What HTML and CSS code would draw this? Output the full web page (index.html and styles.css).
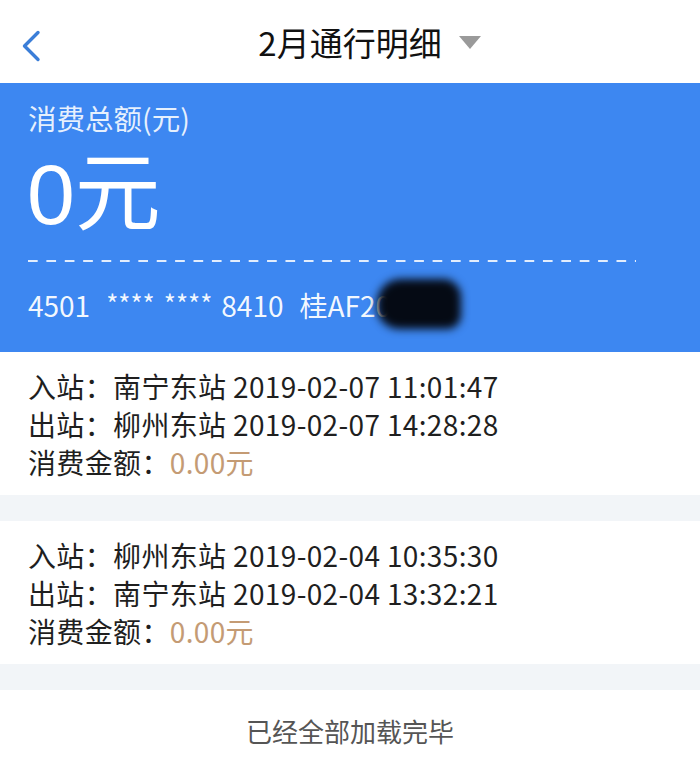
FILE: index.html
```html
<!DOCTYPE html>
<html lang="zh-CN">
<head>
<meta charset="utf-8">
<title>2月通行明细</title>
<link rel="stylesheet" href="styles.css">
</head>
<body>
<div class="page">
  <header class="topbar">
    <div class="back">
      <svg width="28" height="36" viewBox="0 0 28 36"><path d="M23 4.5 L9.5 18 L23 31.5" fill="none" stroke="#3b7ed8" stroke-width="3.4" stroke-linecap="round" stroke-linejoin="round"/></svg>
    </div>
    <div class="title">2月通行明细</div>
    <div class="caret-wrap"><span class="caret"></span></div>
  </header>

  <section class="summary">
    <div class="sum-label">消费总额(元)</div>
    <div class="sum-amount">0元</div>
    <div class="dashes"></div>
    <div class="card-no"><span class="seg">4501</span><span class="stars">****</span><span class="stars">****</span><span class="seg">8410</span><span class="plate">桂AF20</span><span class="blot"></span></div>
  </section>

  <div class="list">
    <div class="item">
      <div class="row">入站：南宁东站 2019-02-07 11:01:47</div>
      <div class="row">出站：柳州东站 2019-02-07 14:28:28</div>
      <div class="row">消费金额：<span class="money">0.00元</span></div>
    </div>
    <div class="item">
      <div class="row">入站：柳州东站 2019-02-04 10:35:30</div>
      <div class="row">出站：南宁东站 2019-02-04 13:32:21</div>
      <div class="row">消费金额：<span class="money">0.00元</span></div>
    </div>
  </div>

  <footer class="end">已经全部加载完毕</footer>
</div>
</body>
</html>
```

FILE: styles.css
```css
* { box-sizing: border-box; }
html, body { margin: 0; padding: 0; }
body {
  width: 700px;
  height: 775px;
  overflow: hidden;
  background: #f2f5f8;
  font-family: "Noto Sans CJK SC", "Noto Sans", sans-serif;
  color: #1c1c1c;
}
.page { display: flex; flex-direction: column; }

.topbar {
  height: 83px;
  background: #fff;
  display: grid;
  grid-template-columns: 1fr auto 1fr;
  align-items: center;
}
.back { padding-left: 15px; display: flex; align-items: center; padding-top: 8px; }
.title {
  font-size: 33px;
  line-height: 40px;
  color: #111;
}
.caret-wrap { display: flex; align-items: center; padding-left: 17px; padding-top: 1px; }
.caret {
  width: 0; height: 0;
  border-left: 11px solid transparent;
  border-right: 11px solid transparent;
  border-top: 13px solid #9a9a9a;
}

.summary {
  background: #3d87f1;
  color: #fff;
  padding: 17px 28px 29px;
  height: 269px;
}
.sum-label { font-size: 28.5px; line-height: 36px; color: rgba(255,255,255,0.88); }
.sum-amount {
  font-family: "Liberation Sans", "Noto Sans CJK SC", sans-serif;
  font-size: 86px;
  line-height: 80px;
  margin-top: 18px;
  margin-left: -1px;
}
.dashes {
  margin-top: 26px;
  height: 2px;
  width: 608px;
  background-image: linear-gradient(to right, rgba(255,255,255,0.85) 0 10px, transparent 10px);
  background-size: 18.4px 2px;
}
.card-no {
  position: relative;
  display: flex;
  align-items: center;
  margin-top: 25px;
  font-size: 28px;
  line-height: 36px;
  color: rgba(255,255,255,0.95);
}
.seg { margin-right: 16px; }
.stars { font-size: 26px; margin-right: 9px; position: relative; top: -2px; }
.blot {
  position: absolute;
  left: 349px;
  top: -8px;
  width: 84px;
  height: 50px;
  background: #050a14;
  border-radius: 24px 18px 14px 22px;
  filter: blur(4px);
}

.list { display: flex; flex-direction: column; gap: 26px; }
.item {
  background: #fff;
  padding: 15px 28px 14px;
}
.row { font-size: 28px; line-height: 38px; color: #1f1f1f; letter-spacing: 0.35px; }
.money { color: #c49b74; }

.end {
  margin-top: 26px;
  height: 90px;
  background: #fff;
  display: flex;
  justify-content: center;
  padding-top: 23px;
  font-size: 26px;
  line-height: 36px;
  color: #555;
}
```
